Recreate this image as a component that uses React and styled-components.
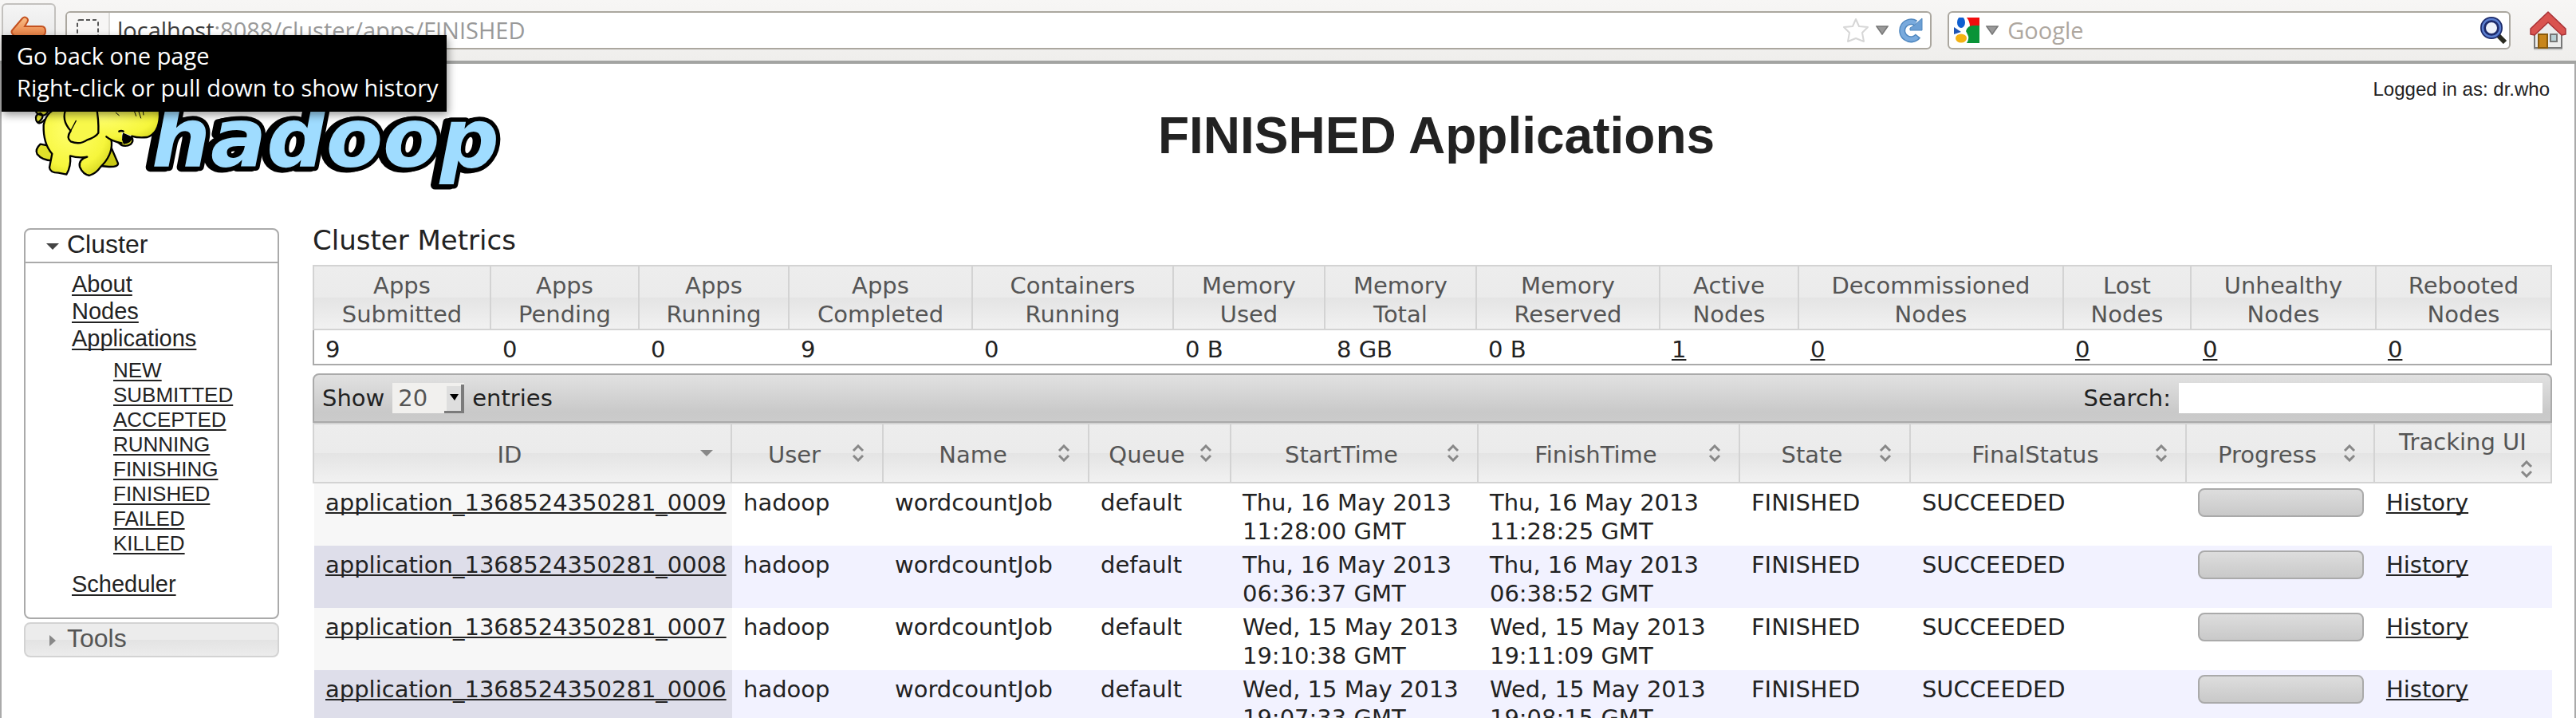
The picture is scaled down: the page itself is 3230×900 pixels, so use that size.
import React from "react";
import styled, { createGlobalStyle, css } from "styled-components";

const GlobalStyle = createGlobalStyle`
  *, *::before, *::after { box-sizing: border-box; }
  body { margin: 0; background: #fff; color: #222; }
  button, input, select { font: inherit; color: inherit; margin: 0; }
`;

const ui = `"Open Sans", "Noto Sans", sans-serif`;
const sans = `"Liberation Sans", Arial, sans-serif`;
const table = `"DejaVu Sans", Verdana, sans-serif`;

/* ---------- browser chrome ---------- */

const Browser = styled.div`
  position: relative;
  display: flex;
  flex-direction: column;
  height: 100vh;
  overflow: hidden;
`;

const Toolbar = styled.header`
  display: flex;
  align-items: flex-start;
  flex: none;
  height: 80px;
  padding: 4px 12px 0 2px;
  background: linear-gradient(#f7f6f5, #efeeec);
  border-bottom: 4px solid #a3a4a2;
  font: 29px/40px ${ui};
`;

const BackButton = styled.button`
  display: flex;
  justify-content: center;
  width: 68px;
  height: 68px;
  margin-right: 12px;
  padding: 14px 0 0;
  border: 2px solid #c3c1be;
  border-radius: 6px;
  background: linear-gradient(#f5f5f5, #e2e2e2);
`;

const Field = styled.form`
  display: flex;
  align-items: center;
  flex: ${(p) => p.$grow} 1 0;
  min-width: 0;
  height: 48px;
  margin: 10px 20px 0 0;
  padding-right: 8px;
  border: 2px solid #aba79f;
  border-radius: 6px;
  background: #fff;
`;

const SearchField = styled(Field)`
  margin-right: 24px;
  padding-right: 2px;
`;

const Identity = styled.span`
  display: flex;
  align-items: center;
  justify-content: center;
  width: 54px;
  height: 44px;
  margin-right: 9px;
  border-right: 2px solid #dddcda;
  border-radius: 4px 0 0 4px;
  background: #f7f6f5;
`;

const Host = styled.label`
  color: #3c3c3c;
`;

const FieldInput = styled.input`
  flex: 1;
  min-width: 0;
  height: 40px;
  margin-left: ${(p) => p.$gap || 0}px;
  padding: 0;
  border: 0;
  outline: 0;
  background: none;
  color: #999;
  &::placeholder { color: #aea79f; opacity: 1; }
`;

const IconButton = styled.button`
  display: flex;
  padding: 0;
  border: 0;
  background: none;
  margin-left: ${(p) => p.$gap || 0}px;
`;

const HomeButton = styled(IconButton)`
  margin-top: 10px;
`;

const Tooltip = styled.div`
  position: absolute;
  z-index: 2;
  top: 44px;
  left: 2px;
  padding: 6px 10px 10px 19px;
  background: #000;
  color: #fff;
  font: 29px/40px ${ui};
  white-space: pre-line;
  box-shadow: 2px 4px 10px rgba(0, 0, 0, 0.4);
`;

/* ---------- page ---------- */

const Page = styled.div`
  flex: 1;
  min-height: 0;
  overflow: hidden;
  padding: 0 28px;
  border: solid #aaa;
  border-width: 0 2px;
`;

const Banner = styled.div`
  display: grid;
  grid-template-columns: 600px 1fr 228px;
  height: 201px;
`;

const Title = styled.h1`
  margin: 53px 0 0;
  font: bold 64px/74px ${sans};
  text-align: center;
`;

const Login = styled.div`
  margin-top: 18px;
  padding-right: 3px;
  font: 24px/28px ${sans};
  text-align: right;
  white-space: nowrap;
`;

const Columns = styled.div`
  display: grid;
  grid-template-columns: 320px minmax(0, 1fr);
  column-gap: 42px;
  align-items: start;
`;

const link = css`
  color: #222;
  text-decoration: underline;
  text-decoration-thickness: 2px;
  text-decoration-skip-ink: none;
`;

const Sidebar = styled.nav`
  padding-top: 5px;
  font-family: ${sans};
`;

const Panel = styled.section`
  margin-bottom: 4px;
  border: 2px solid ${(p) => (p.$open ? "#aaa" : "#d3d3d3")};
  border-radius: 8px;
  background: ${(p) => (p.$open ? "#fff" : "linear-gradient(#ececec 50%, #e3e3e3 50%, #ececec)")};
`;

const PanelToggle = styled.button`
  display: flex;
  align-items: center;
  width: 100%;
  height: 40px;
  padding: 0 0 4px 26px;
  border: 0;
  background: none;
  color: ${(p) => (p.$open ? "#212121" : "#555")};
  font: 32px/36px ${sans};
  svg { margin: 5px 10px 0 0; }
`;

const PanelBody = styled.ul`
  margin: 0;
  padding: 9px 0 25px 58px;
  border-top: 2px solid #aaa;
  list-style: none;
  font-size: 29px;
  line-height: 34px;
`;

const StateList = styled.ul`
  margin: 8px 0 18px;
  padding: 0 0 0 52px;
  list-style: none;
  font-size: 26px;
  line-height: 31px;
`;

const NavLink = styled.a`
  ${link}
  text-underline-offset: 3px;
`;

const Content = styled.main`
  font: 29px/36px ${table};
`;

const MetricsTitle = styled.h2`
  margin: 0 0 11px;
  font: 34px/40px ${table};
`;

const DataTable = styled.table`
  width: 100%;
  table-layout: fixed;
  border-collapse: separate;
  border-spacing: 0;
`;

const HeadCell = styled.th`
  height: ${(p) => p.$height}px;
  padding: ${(p) => p.$pad};
  border: solid #d3d3d3;
  border-width: 2px 0 2px 2px;
  background: linear-gradient(#ededed 0, #ebebeb 50%, #e4e4e4 50%, #f1f1f1);
  color: #555;
  font-weight: normal;
  &:last-child { border-right-width: 2px; }
`;

const MetricCell = styled.td`
  padding: 6px 14px 0 16px;
  border-bottom: 2px solid #aaa;
  &:first-child { padding-left: 14px; border-left: 2px solid #aaa; }
  &:last-child { border-right: 2px solid #aaa; }
`;

const CellLink = styled.a`
  ${link}
  text-underline-offset: 2px;
`;

const Controls = styled.div`
  display: flex;
  justify-content: space-between;
  margin-top: 10px;
  padding: 10px;
  border: 2px solid #aaa;
  border-radius: 8px 8px 0 0;
  background: linear-gradient(#e1e1e1, #c9c9c9 80%, #cbcbcb);
  line-height: 38px;
`;

const Control = styled.div`
  display: flex;
  gap: 10px;
`;

const SelectBox = styled.span`
  position: relative;
  display: flex;
  width: 90px;
  height: 38px;
  background: #f1f0ee;
  svg {
    position: absolute;
    top: 2px;
    right: 0;
    pointer-events: none;
  }
`;

const Select = styled.select`
  width: 100%;
  padding: 0 0 0 7px;
  border: 0;
  appearance: none;
  background: none;
  color: #555;
`;

const SearchInput = styled.input`
  width: 456px;
  height: 38px;
  padding: 0 8px;
  border: 0;
  background: #fff;
`;

const SortButton = styled.button`
  display: flex;
  flex-wrap: wrap;
  align-items: flex-start;
  width: 100%;
  padding: 0;
  border: 0;
  background: none;
  line-height: 36px;
`;

const SortLabel = styled.span`
  flex: 1 0 auto;
  padding: 0 6px;
  text-align: center;
`;

const SortMark = styled.span`
  display: flex;
  align-items: center;
  justify-content: center;
  width: 32px;
  height: 32px;
  margin-left: auto;
`;

const Row = styled.tr`
  background: ${(p) => (p.$even ? "#f2f2ff" : "#fff")};
`;

const Cell = styled.td`
  padding: 6px 12px 0 14px;
  border-left: 2px solid transparent;
  vertical-align: top;
  &:first-child {
    background: ${(p) => (p.$even ? "#dedeea" : "#f7f7f7")};
    border-left-color: #fff;
  }
  &:nth-child(2) { border-left-color: ${(p) => (p.$even ? "#dedeea" : "#f7f7f7")}; }
`;

const ProgressBar = styled.div`
  height: 36px;
  border: 2px solid #aaa;
  border-radius: 8px;
  background: linear-gradient(#dddddd, #c9c9c9);
`;

/* ---------- drawings ---------- */

const BackArrow = () => (
  <svg width="46" height="40" viewBox="0 0 46 40" aria-hidden="true">
    <defs>
      <linearGradient id="arrow" x1="0" y1="0" x2="0" y2="1">
        <stop offset="0" stopColor="#f9c089" />
        <stop offset="1" stopColor="#dd5a1c" />
      </linearGradient>
    </defs>
    <path
      d="M3 17 L15 3 Q18 0 21 3 Q23 5 21 8 L18 13 H39 Q44 13 44 19 Q44 25 39 25 H18 L21 31 Q23 34 21 36 Q18 39 15 36 L3 23 Q0 20 3 17Z"
      fill="url(#arrow)" stroke="#c4511f" strokeWidth="2" />
  </svg>
);

const Caret = () => (
  <svg width="16" height="12" viewBox="0 0 16 12" aria-hidden="true">
    <path d="M1 1H15L8 11Z" fill="#999" stroke="#777" strokeWidth="1.500" />
  </svg>
);

const Star = () => (
  <svg width="34" height="32" viewBox="0 0 34 32" aria-hidden="true">
    <path d="M17 2 L21 11 L32 12 L25 19 L27 30 L17 26 L7 30 L9 19 L2 12 L13 11Z"
      fill="#fff" stroke="#d6d6d6" strokeWidth="2" strokeLinejoin="round" />
  </svg>
);

const Reload = () => (
  <svg width="32" height="32" viewBox="0 0 32 32" aria-hidden="true">
    <path d="M25 23 A11 11 0 1 1 22 7" fill="none" stroke="#4f87bf" strokeWidth="8" />
    <path d="M24 24 A11 11 0 1 1 22 7" fill="none" stroke="#79aadd" strokeWidth="5" />
    <path d="M30 1V16H15V13L20 10Z" fill="#6c9fd4" stroke="#4f87bf" strokeWidth="1" />
  </svg>
);

const GoogleMark = () => (
  <svg width="32" height="32" viewBox="0 0 32 32" aria-hidden="true">
    <rect width="32" height="32" fill="#fff" />
    <path d="M16 0H32V11H20Q20 5 16 0Z" fill="#f20d0d" />
    <path d="M15 17Q17 10 24 10H32V32H16Q20 26 17 21Z" fill="#0a9438" />
    <ellipse cx="9" cy="6" rx="5" ry="7" fill="#0f5fd0" />
    <path d="M0 12L9 18L0 21Z" fill="#1f56b5" />
    <ellipse cx="9" cy="26" rx="7" ry="5.500" fill="#f4b213" />
  </svg>
);

const Magnifier = () => (
  <svg width="34" height="34" viewBox="0 0 34 34" aria-hidden="true">
    <path d="M22 23L31 32" stroke="#2b2b20" strokeWidth="6" />
    <circle cx="14" cy="14" r="10.500" fill="#eef2fb" stroke="#1d2b6b" strokeWidth="7" />
    <circle cx="14" cy="14" r="11" fill="none" stroke="#5b7fd0" strokeWidth="2.500" />
  </svg>
);

const Home = () => (
  <svg width="46" height="50" viewBox="0 0 46 50" aria-hidden="true">
    <path d="M5 46H41V49H5Z" fill="#cfcfcf" />
    <path d="M6 24L23 6L40 24V46H6Z" fill="#ececec" stroke="#777" strokeWidth="2" />
    <rect x="11" y="29" width="11" height="17" fill="#c8851b" stroke="#8a5a0c" strokeWidth="2" />
    <rect x="26" y="29" width="8" height="9" fill="#b9d0d4" stroke="#777" strokeWidth="2" />
    <path d="M23 1L45 22V29L40 30L23 14L6 30L1 29V22Z" fill="#d9534f" stroke="#a83236" strokeWidth="1.500" strokeLinejoin="round" />
  </svg>
);

const LogoSvg = styled.svg`
  display: block;
  margin-top: 20px;
  overflow: visible;
  text {
    font: italic bold 104px ${table};
    fill: #9fdcff;
    stroke: #000;
    stroke-width: 11px;
    stroke-linejoin: round;
    paint-order: stroke;
    filter: drop-shadow(-5px 1px 0 #000);
  }
`;

const Logo = () => (
  <LogoSvg width="600" height="140" viewBox="30 100 600 140" role="img" aria-label="hadoop">
    <defs>
      <radialGradient id="hide" cx="0.4" cy="0.35" r="0.75">
        <stop offset="0" stopColor="#ffff6e" />
        <stop offset="0.7" stopColor="#f6f63c" />
        <stop offset="1" stopColor="#d2d21c" />
      </radialGradient>
    </defs>
    <text x="190" y="209">hadoop</text>
    <g transform="translate(20 130) scale(0.3333)" stroke="#000" strokeWidth="7" strokeLinejoin="round" strokeLinecap="round">
      <path d="M108 60 Q85 85 76 62 Q70 40 92 36 Q112 48 84 70 M76 20 Q70 36 92 42 Q112 50 122 26" fill="#e6e62c" />
      <path d="M92 152 Q70 172 80 190 Q100 215 140 214 L134 160Z" fill="#e0e02a" />
      <path d="M352 150 L384 224 Q386 238 350 237 L318 234Z" fill="#c9c914" />
      <path d="M180 10 Q115 20 104 80 Q102 150 136 188 L126 240 Q128 260 160 260 L190 266 Q208 235 204 196 Q236 206 268 200 Q234 210 240 238 Q252 266 276 270 Q302 262 318 238 Q362 196 360 146 L340 20Z" fill="url(#hide)" />
      <path d="M380 140 Q404 170 432 152 Q444 140 436 126Z" fill="#e6e62c" />
      <path d="M180 0 H540 V50 Q536 112 494 126 Q460 130 428 118 L398 108 L400 146 Q362 142 340 124 L310 110Z" fill="url(#hide)" stroke="none" />
      <path d="M540 0 V50 Q536 112 494 126 Q460 130 436 122 M388 104 Q396 100 404 104 M398 148 Q362 142 340 124" fill="none" />
      <path d="M404 112 L436 126 Q434 148 406 150 Q398 130 404 112Z" fill="#000" strokeWidth="4" />
      <path d="M190 15 Q168 60 206 102 Q188 128 206 142 Q240 156 268 136 Q300 126 310 110 Q312 60 302 10Z" fill="#f8f84a" />
      <path d="M206 102 L226 64" fill="none" strokeWidth="4" />
      <path d="M376 34 L388 44 M446 30 L452 46 M462 30 L470 54 M478 28 L480 42" fill="none" strokeWidth="3" />
    </g>
  </LogoSvg>
);

const TriangleDown = ({ color }) => (
  <svg width="16" height="8" viewBox="0 0 16 8" aria-hidden="true"><path d="M0 0H16L8 8Z" fill={color} /></svg>
);

const TriangleRight = () => (
  <svg width="16" height="16" viewBox="0 0 16 16" aria-hidden="true"><path d="M4 1V15L12 8Z" fill="#888" /></svg>
);

const SortNone = () => (
  <svg width="16" height="22" viewBox="0 0 16 22" aria-hidden="true">
    <path d="M2 8L8 2L14 8M2 14L8 20L14 14" fill="none" stroke="#888" strokeWidth="3" />
  </svg>
);

const DropArrow = () => (
  <svg width="25" height="36" viewBox="0 0 25 36" aria-hidden="true">
    <path d="M0 36V33H21V0H25V36Z" fill="#7b7b7b" />
    <path d="M3 2H21V33H3Z" fill="#dedede" />
    <path d="M7 12H18L13 20Z" fill="#000" />
  </svg>
);

/* ---------- data ---------- */

const states = ["NEW", "SUBMITTED", "ACCEPTED", "RUNNING", "FINISHING", "FINISHED", "FAILED", "KILLED"];

const metrics = [
  { a: "Apps", b: "Submitted", value: "9", w: 222 },
  { a: "Apps", b: "Pending", value: "0", w: 186 },
  { a: "Apps", b: "Running", value: "0", w: 188 },
  { a: "Apps", b: "Completed", value: "9", w: 230 },
  { a: "Containers", b: "Running", value: "0", w: 252 },
  { a: "Memory", b: "Used", value: "0 B", w: 190 },
  { a: "Memory", b: "Total", value: "8 GB", w: 190 },
  { a: "Memory", b: "Reserved", value: "0 B", w: 230 },
  { a: "Active", b: "Nodes", value: "1", w: 174, href: "#active" },
  { a: "Decommissioned", b: "Nodes", value: "0", w: 332, href: "#decommissioned" },
  { a: "Lost", b: "Nodes", value: "0", w: 160, href: "#lost" },
  { a: "Unhealthy", b: "Nodes", value: "0", w: 232, href: "#unhealthy" },
  { a: "Rebooted", b: "Nodes", value: "0", w: 222, href: "#rebooted" },
];

const columns = [
  ["ID", 524], ["User", 190], ["Name", 258], ["Queue", 178], ["StartTime", 310],
  ["FinishTime", 328], ["State", 214], ["FinalStatus", 346], ["Progress", 236], ["Tracking UI", 224],
];

const apps = [
  ["0009", "Thu, 16 May 2013 11:28:00 GMT", "Thu, 16 May 2013 11:28:25 GMT"],
  ["0008", "Thu, 16 May 2013 06:36:37 GMT", "Thu, 16 May 2013 06:38:52 GMT"],
  ["0007", "Wed, 15 May 2013 19:10:38 GMT", "Wed, 15 May 2013 19:11:09 GMT"],
  ["0006", "Wed, 15 May 2013 19:07:33 GMT", "Wed, 15 May 2013 19:08:15 GMT"],
];

const ColGroup = ({ widths }) => {
  const total = widths.reduce((sum, w) => sum + w, 0);
  return (
    <colgroup>
      {widths.map((w, i) => <col key={i} style={{ width: `${(w / total) * 100}%` }} />)}
    </colgroup>
  );
};

export default function App() {
  return (
    <Browser>
      <GlobalStyle />
      <Toolbar>
        <BackButton type="button" aria-label="Go back one page"><BackArrow /></BackButton>
        <Field $grow={2322}>
          <Identity>
            <svg width="30" height="30" viewBox="0 0 30 30" aria-hidden="true">
              <rect x="2" y="2" width="26" height="26" rx="3" fill="none" stroke="#555" strokeWidth="2" strokeDasharray="5 3" />
            </svg>
          </Identity>
          <Host htmlFor="url">localhost</Host>
          <FieldInput id="url" defaultValue=":8088/cluster/apps/FINISHED" />
          <IconButton type="button" aria-label="Bookmark"><Star /></IconButton>
          <IconButton type="button" aria-label="Show addresses" $gap={8}><Caret /></IconButton>
          <IconButton type="button" aria-label="Reload" $gap={12}><Reload /></IconButton>
        </Field>
        <SearchField $grow={698}>
          <IconButton type="button" aria-label="Choose search engine" $gap={6}><GoogleMark /></IconButton>
          <IconButton type="button" aria-label="Search engines" $gap={8}><Caret /></IconButton>
          <FieldInput aria-label="Web search" placeholder="Google" $gap={11} />
          <IconButton type="submit" aria-label="Search the web"><Magnifier /></IconButton>
        </SearchField>
        <HomeButton type="button" aria-label="Home"><Home /></HomeButton>
      </Toolbar>
      <Tooltip role="tooltip">{"Go back one page\nRight-click or pull down to show history"}</Tooltip>

      <Page>
        <Banner>
          <Logo />
          <Title>FINISHED Applications</Title>
          <Login>Logged in as: dr.who</Login>
        </Banner>
        <Columns>
          <Sidebar>
            <Panel $open>
              <PanelToggle type="button" $open aria-expanded="true"><TriangleDown color="#444" />Cluster</PanelToggle>
              <PanelBody>
                <li><NavLink href="#about">About</NavLink></li>
                <li><NavLink href="#nodes">Nodes</NavLink></li>
                <li>
                  <NavLink href="#apps">Applications</NavLink>
                  <StateList>
                    {states.map((s) => <li key={s}><NavLink href={`#${s}`}>{s}</NavLink></li>)}
                  </StateList>
                </li>
                <li><NavLink href="#scheduler">Scheduler</NavLink></li>
              </PanelBody>
            </Panel>
            <Panel>
              <PanelToggle type="button" aria-expanded="false"><TriangleRight />Tools</PanelToggle>
            </Panel>
          </Sidebar>

          <Content>
            <MetricsTitle>Cluster Metrics</MetricsTitle>
            <DataTable>
              <ColGroup widths={metrics.map((m) => m.w)} />
              <thead>
                <tr>
                  {metrics.map((m, i) => (
                    <HeadCell key={i} scope="col" $height={82} $pad="6px 0 0">{m.a}<br />{m.b}</HeadCell>
                  ))}
                </tr>
              </thead>
              <tbody>
                <tr>
                  {metrics.map((m, i) => (
                    <MetricCell key={i}>{m.href ? <CellLink href={m.href}>{m.value}</CellLink> : m.value}</MetricCell>
                  ))}
                </tr>
              </tbody>
            </DataTable>

            <Controls>
              <Control>
                <label htmlFor="length">Show</label>
                <SelectBox>
                  <Select id="length" defaultValue="20">
                    <option>20</option>
                    <option>40</option>
                    <option>60</option>
                  </Select>
                  <DropArrow />
                </SelectBox>
                <span>entries</span>
              </Control>
              <Control>
                <label htmlFor="filter">Search:</label>
                <SearchInput id="filter" type="text" />
              </Control>
            </Controls>

            <DataTable>
              <ColGroup widths={columns.map((c) => c[1])} />
              <thead>
                <tr>
                  {columns.map(([name], i) => (
                    <HeadCell key={name} scope="col" $height={76} $pad="4px 14px 0">
                      <SortButton type="button">
                        <SortLabel>{name}</SortLabel>
                        <SortMark>{i === 0 ? <TriangleDown color="#888" /> : <SortNone />}</SortMark>
                      </SortButton>
                    </HeadCell>
                  ))}
                </tr>
              </thead>
              <tbody>
                {apps.map(([id, start, finish], i) => {
                  const even = i % 2 === 1;
                  return (
                    <Row key={id} $even={even}>
                      <Cell $even={even}><CellLink href={`#${id}`}>application_1368524350281_{id}</CellLink></Cell>
                      <Cell $even={even}>hadoop</Cell>
                      <Cell>wordcountJob</Cell>
                      <Cell>default</Cell>
                      <Cell>{start}</Cell>
                      <Cell>{finish}</Cell>
                      <Cell>FINISHED</Cell>
                      <Cell>SUCCEEDED</Cell>
                      <Cell><ProgressBar role="progressbar" aria-label="Progress" aria-valuenow={100} /></Cell>
                      <Cell><CellLink href={`#history-${id}`}>History</CellLink></Cell>
                    </Row>
                  );
                })}
              </tbody>
            </DataTable>
          </Content>
        </Columns>
      </Page>
    </Browser>
  );
}
